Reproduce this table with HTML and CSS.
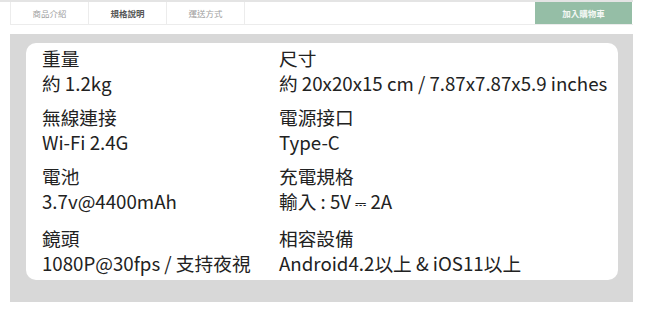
FILE: index.html
```html
<!DOCTYPE html>
<html lang="zh-Hant">
<head>
<meta charset="utf-8">
<link rel="stylesheet" href="styles.css">
</head>
<body>
<div class="page">
  <div class="topbar">
    <nav class="tabs">
      <a class="tab">商品介紹</a>
      <a class="tab active">規格說明</a>
      <a class="tab">運送方式</a>
    </nav>
    <div class="spacer"></div>
    <button class="cart">加入購物車</button>
  </div>
  <section class="panel">
    <div class="card">
      <div class="spec"><div class="label">重量</div><div class="value">約 1.2kg</div></div>
      <div class="spec"><div class="label">尺寸</div><div class="value">約 20x20x15 cm / 7.87x7.87x5.9 inches</div></div>
      <div class="spec"><div class="label">無線連接</div><div class="value">Wi-Fi 2.4G</div></div>
      <div class="spec"><div class="label">電源接口</div><div class="value">Type-C</div></div>
      <div class="spec"><div class="label">電池</div><div class="value">3.7v@4400mAh</div></div>
      <div class="spec"><div class="label">充電規格</div><div class="value">輸入 : 5V <span class="dc">⎓</span> 2A</div></div>
      <div class="spec"><div class="label">鏡頭</div><div class="value">1080P@30fps / 支持夜視</div></div>
      <div class="spec"><div class="label">相容設備</div><div class="value">Android4.2以上 &amp; iOS11以上</div></div>
    </div>
  </section>
</div>
</body>
</html>
```
FILE: styles.css
```css
html, body {
  margin: 0;
  padding: 0;
  background: #ffffff;
}
body {
  font-family: "Noto Sans CJK TC", "Noto Sans", sans-serif;
  color: #222;
}
.page {
  width: 633px;
  border-top: 2px solid #e4e4e4;
}
.topbar {
  display: flex;
  margin-left: 10px;
  height: 22px;
  border-bottom: 1px solid #ececec;
}
.tabs {
  display: flex;
  border-left: 1px solid #ececec;
}
.tab {
  width: 77px;
  border-right: 1px solid #ececec;
  font-size: 8.5px;
  color: #a0a0a0;
  display: flex;
  align-items: center;
  justify-content: center;
}
.tab.active {
  color: #555;
  font-weight: bold;
}
.spacer {
  flex: 1;
}
.cart {
  width: 97px;
  margin-right: 1px;
  border: 0;
  background: #95bea6;
  color: #f4f8f5;
  font-family: inherit;
  font-size: 8.5px;
  font-weight: bold;
  padding: 0;
}
.panel {
  margin: 9px 0 0 10px;
  background: #d8d8d8;
  padding: 9px 15px 22px 16px;
}
.card {
  background: #fff;
  border-radius: 10px;
  padding: 2px 0 5px 16px;
  display: grid;
  grid-template-columns: 237px 1fr;
  row-gap: 9px;
}
.spec {
  font-size: 18.7px;
  line-height: 25px;
  white-space: nowrap;
}
.dc {
  font-size: 14px;
}
```
